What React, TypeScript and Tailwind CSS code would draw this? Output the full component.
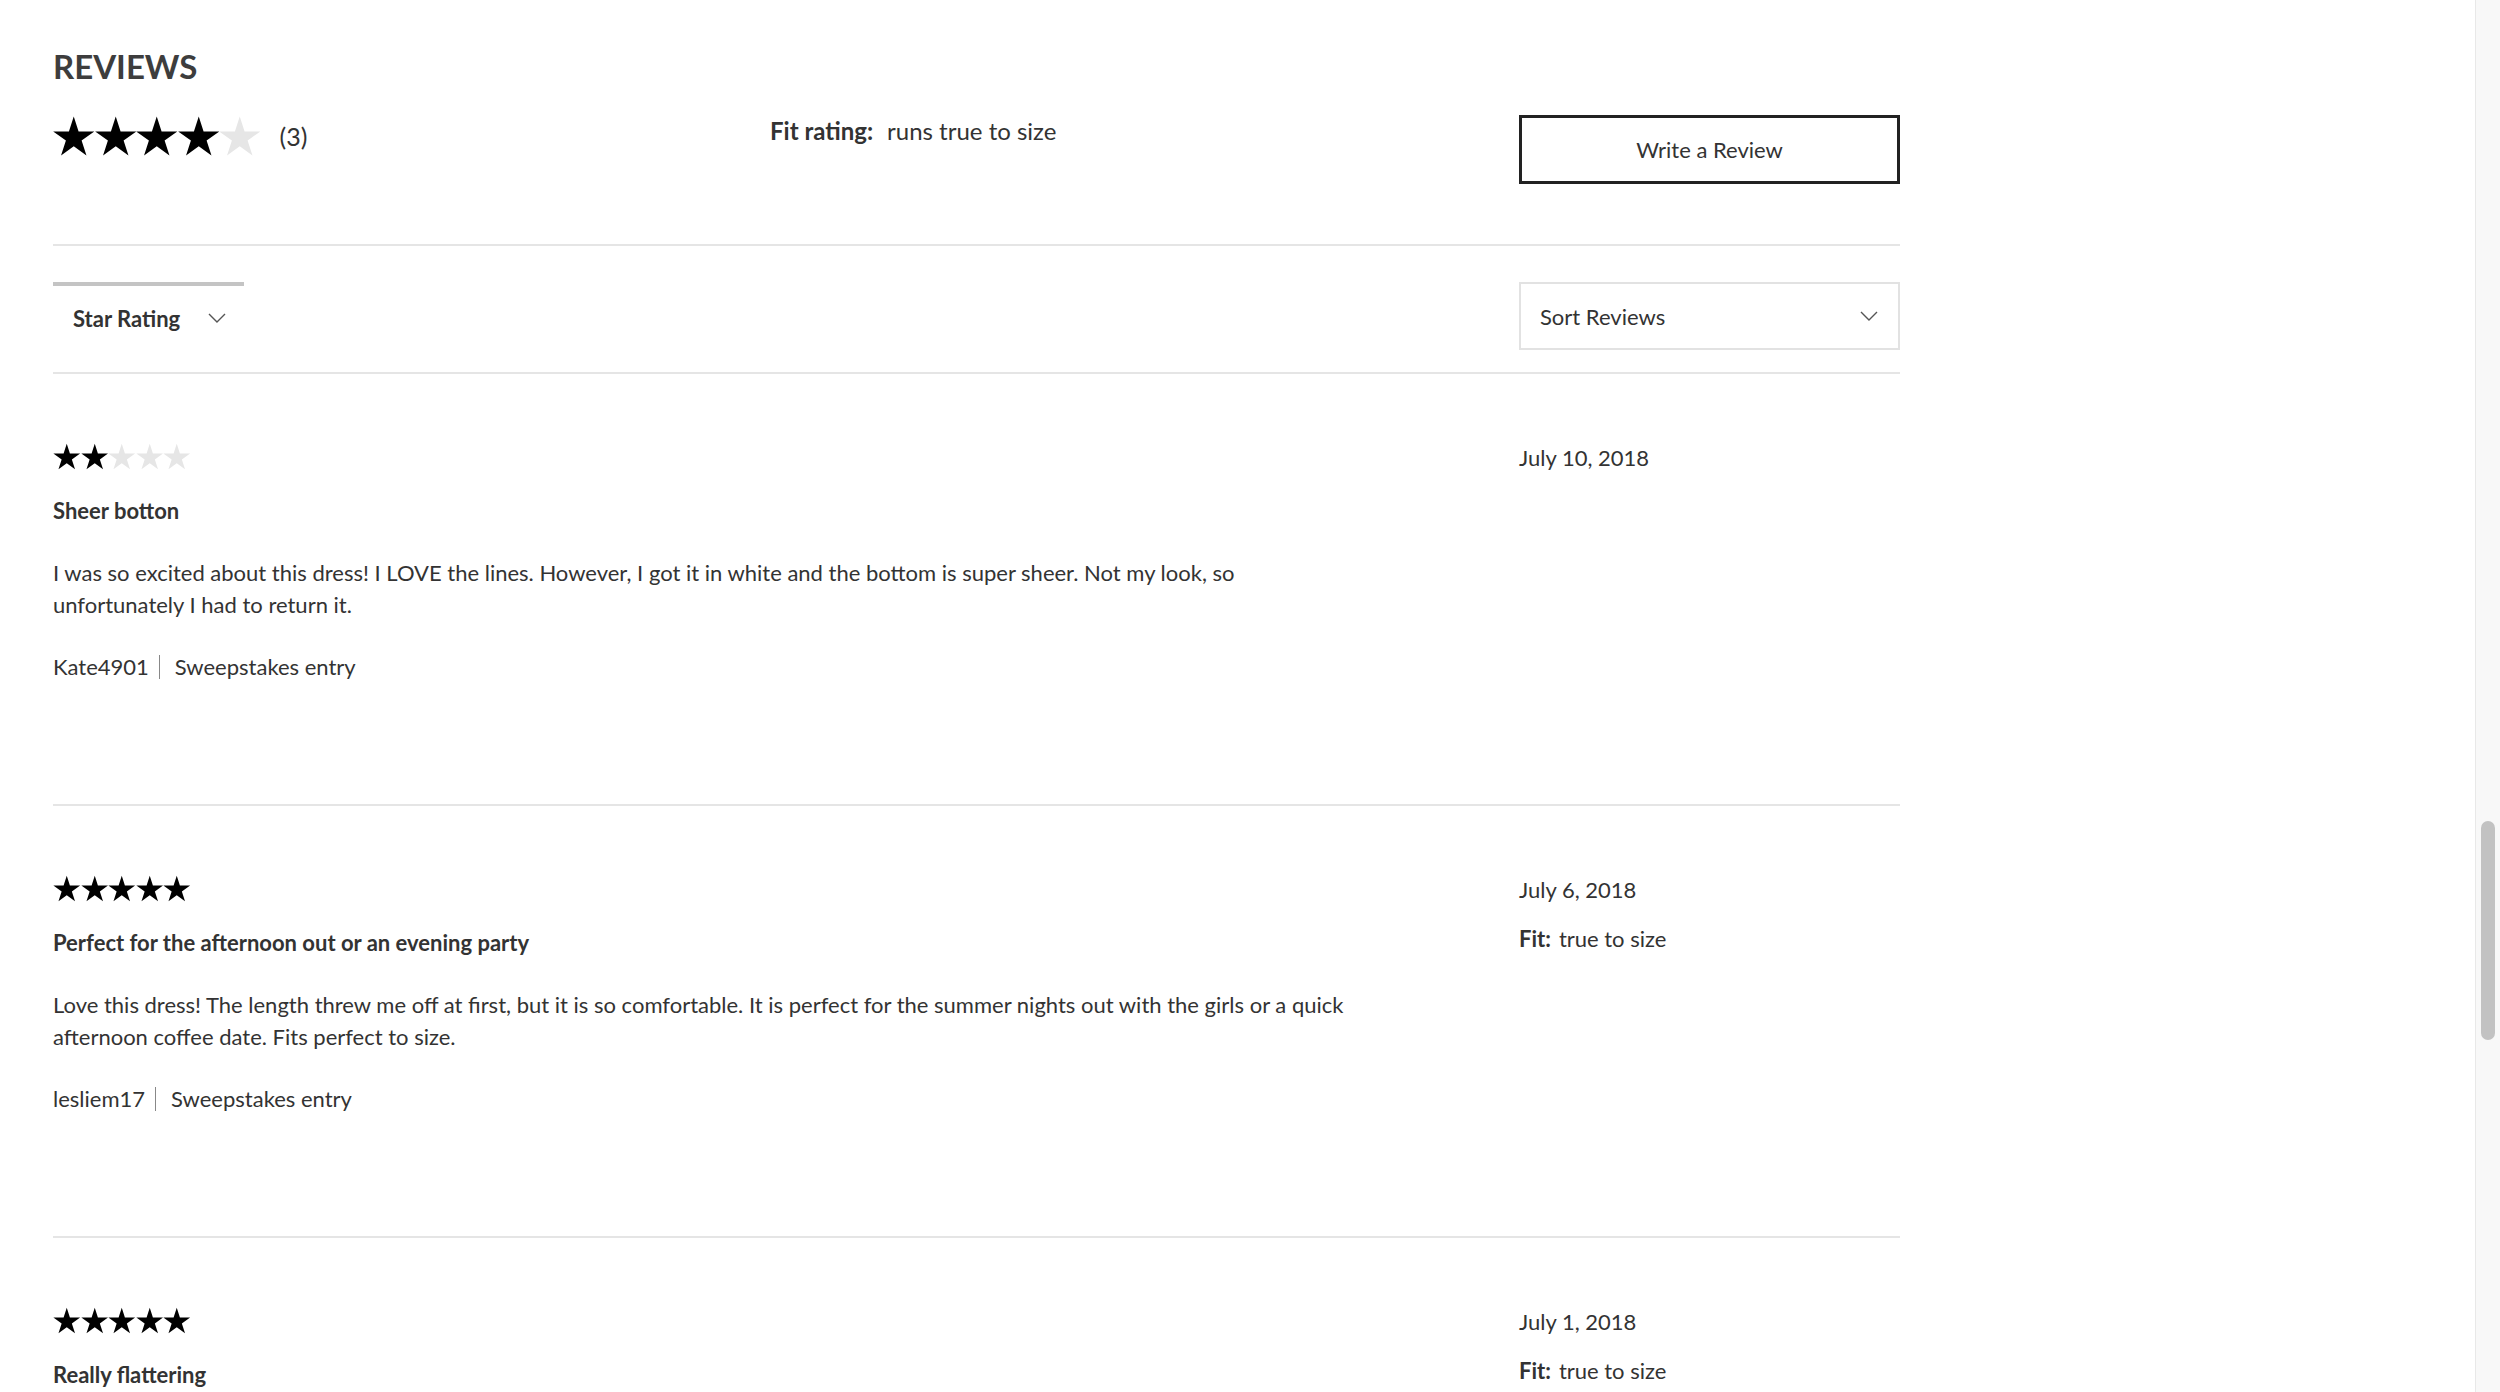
import React from "react";

type Review = {
  rating: number;
  title: string;
  body?: string;
  author?: string;
  date: string;
  fit?: string;
};

const reviews: Review[] = [
  {
    rating: 2,
    title: "Sheer botton",
    body: "I was so excited about this dress! I LOVE the lines. However, I got it in white and the bottom is super sheer. Not my look, so unfortunately I had to return it.",
    author: "Kate4901",
    date: "July 10, 2018",
  },
  {
    rating: 5,
    title: "Perfect for the afternoon out or an evening party",
    body: "Love this dress! The length threw me off at first, but it is so comfortable. It is perfect for the summer nights out with the girls or a quick afternoon coffee date. Fits perfect to size.",
    author: "lesliem17",
    date: "July 6, 2018",
    fit: "true to size",
  },
  {
    rating: 5,
    title: "Really flattering",
    date: "July 1, 2018",
    fit: "true to size",
  },
];

const STAR = "12,0.7 14.8,9.34 23.89,9.34 16.54,14.67 19.35,23.31 12,17.97 4.65,23.31 7.46,14.67 0.11,9.34 9.2,9.34";

function Stars({ value, big }: { value: number; big?: boolean }) {
  return (
    <div className="flex">
      {[0, 1, 2, 3, 4].map((i) => (
        <svg
          key={i}
          viewBox="0 0 24 24"
          className={big ? "h-[42px] w-[41.5px]" : "h-[27px] w-[27.5px]"}
        >
          <polygon points={STAR} fill={i < value ? "#000" : "#e6e6e6"} />
        </svg>
      ))}
    </div>
  );
}

function Chevron() {
  return (
    <svg viewBox="0 0 18 10" className="h-[10px] w-[18px]">
      <polyline points="1,1 9,9 17,1" fill="none" stroke="#555" strokeWidth="1.4" />
    </svg>
  );
}

function ReviewRow({ r }: { r: Review }) {
  return (
    <>
      <div className="flex pt-[69px] pb-[121px]">
        <div className="w-[1466px]">
          <Stars value={r.rating} />
          <div className="mt-[25px] font-bold leading-[32px]">{r.title}</div>
          {r.body ? <p className="mt-[30px] w-[1316px] leading-[32px]">{r.body}</p> : null}
          {r.author ? (
            <div className="mt-[30px] flex items-center leading-[32px]">
              <span>{r.author}</span>
              <span className="ml-[10px] mr-[15px] h-[24px] w-px bg-[#888]" />
              <span>Sweepstakes entry</span>
            </div>
          ) : null}
        </div>
        <div className="w-[381px]">
          <div className="leading-[30px]">{r.date}</div>
          {r.fit ? (
            <div className="mt-[18px] leading-[32px]">
              <span className="font-bold">Fit:</span>
              <span className="ml-[8px]">{r.fit}</span>
            </div>
          ) : null}
        </div>
      </div>
      <div className="h-[2px] bg-[#e5e5e5]" />
    </>
  );
}

export default function App() {
  return (
    <div className="flex h-screen w-full overflow-hidden bg-white font-['Lato',sans-serif] text-[22px] text-[#333]">
      <div className="min-w-0 flex-1 overflow-hidden">
        <div className="ml-[53px] w-[1847px] pt-[46px]">
          <h2 className="text-[33px] font-bold leading-[40px] text-[#3d3d3d]">REVIEWS</h2>

          <div className="mt-[29px] flex h-[69px] items-start">
            <div className="flex w-[717px] items-center">
              <Stars value={4} big />
              <span className="ml-[19px] text-[25px] leading-[32px]">(3)</span>
            </div>
            <div className="flex-1 text-[24px] leading-[32px]">
              <span className="font-bold">Fit rating:</span>
              <span className="ml-[14px]">runs true to size</span>
            </div>
            <button
              type="button"
              className="h-[69px] w-[381px] border-[3px] border-[#222] text-[22px] text-[#333]"
            >
              Write a Review
            </button>
          </div>

          <div className="mt-[60px] h-[2px] bg-[#e5e5e5]" />

          <div className="mt-[36px] flex items-start justify-between">
            <div className="flex h-[68px] w-[191px] items-center gap-[28px] border-t-4 border-[#c4c4c4] pl-[20px]">
              <span className="font-bold">Star Rating</span>
              <Chevron />
            </div>
            <div className="flex h-[68px] w-[381px] items-center justify-between border-2 border-[#e2e2e2] pl-[19px] pr-[20px]">
              <span>Sort Reviews</span>
              <Chevron />
            </div>
          </div>

          <div className="mt-[22px] h-[2px] bg-[#e5e5e5]" />

          {reviews.map((r) => (
            <ReviewRow key={r.date} r={r} />
          ))}
        </div>
      </div>

      <div className="flex h-full w-[25px] shrink-0 justify-center border-l border-[#e8e8e8] bg-[#f8f8f8]">
        <div className="mt-[821px] h-[219px] w-[14px] rounded-full bg-[#c2c2c2]" />
      </div>
    </div>
  );
}
